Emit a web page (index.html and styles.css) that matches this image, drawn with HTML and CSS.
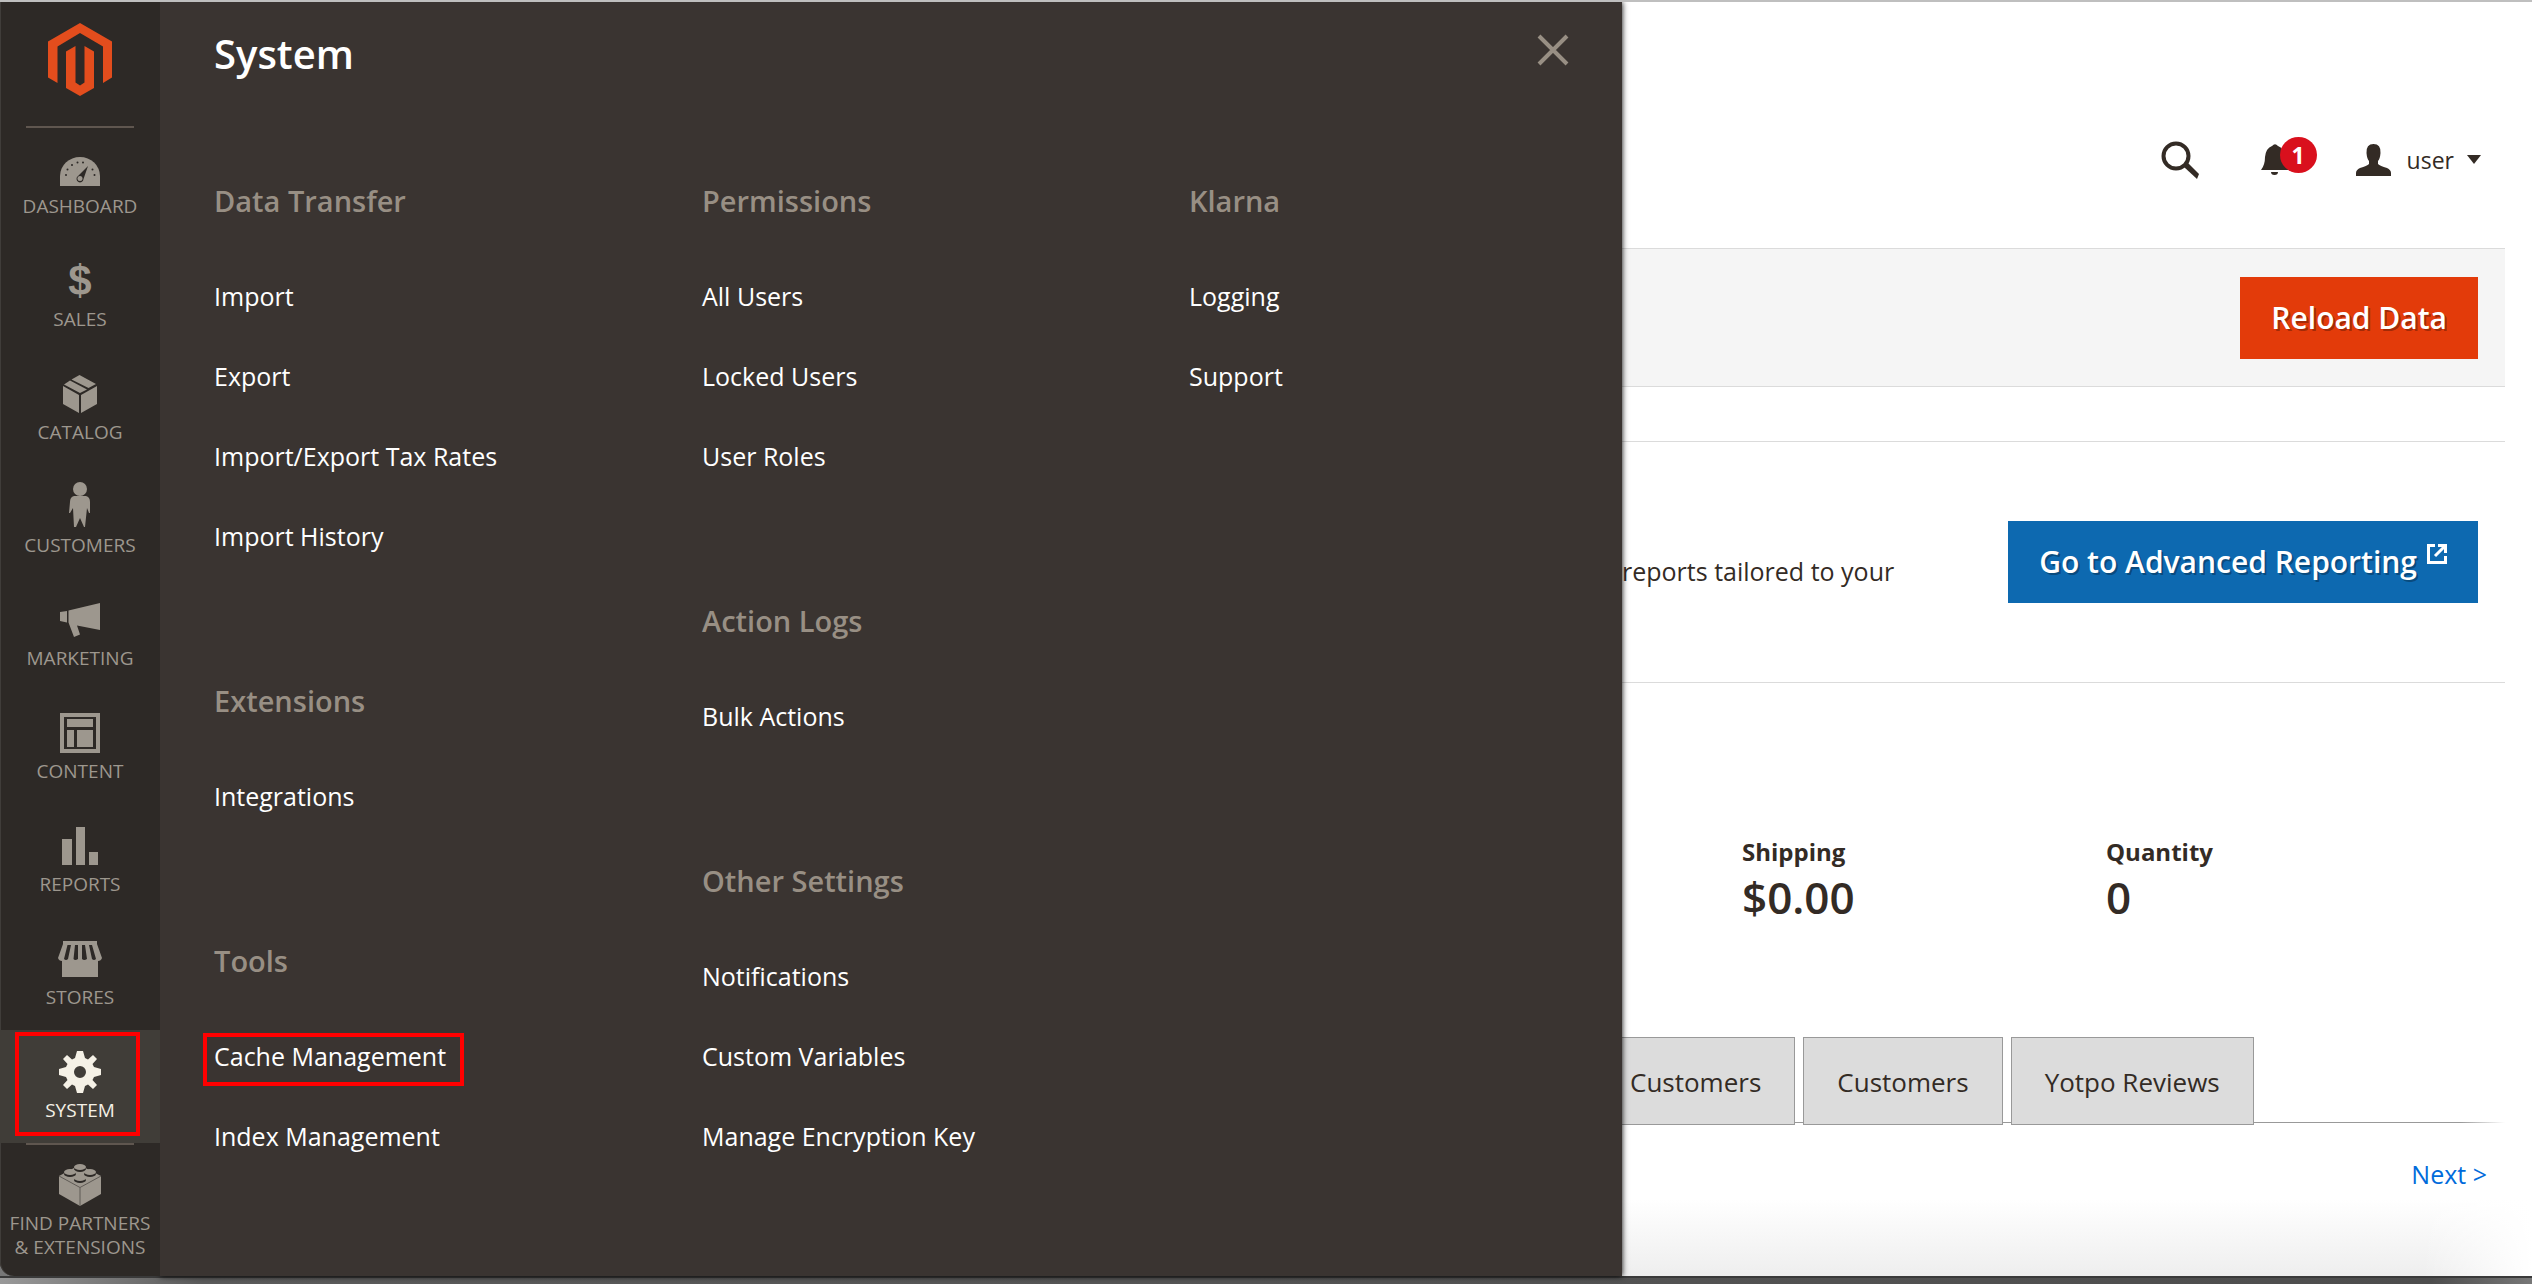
FILE: index.html
```html
<!DOCTYPE html>
<html lang="en">
<head>
<meta charset="utf-8">
<title>Dashboard / Magento Admin</title>
<link rel="stylesheet" href="styles.css">
</head>
<body>
<div class="app">
  <nav class="sidebar" aria-label="Main">
    <a class="logo" href="#" aria-label="Magento">
      <svg width="64" height="73" viewBox="0 0 64 73"><path d="M32 0 64 18.500V54.500L55 60V23.500L32 10 9.500 23.500V60L0 54.500V18.500Z"/><path d="M18 28.500 27.500 23V59.500L32 62.500 36.500 59.500V23L46 28.500V65L32 73 18 65Z"/></svg>
    </a>
    <ul class="menu">
      <li><a class="item" href="#"><span class="glyph"><svg width="40" height="35" viewBox="0 -6 40 35"><path d="M0 29V19A20 19 0 0 1 40 19V29Z"/><g class="cut"><circle cx="6" cy="18" r="1"/><circle cx="7.500" cy="12.500" r="1"/><circle cx="12" cy="8" r="1"/><circle cx="17.500" cy="5.500" r="1"/><circle cx="23" cy="5.500" r="1"/><circle cx="32.500" cy="12.500" r="1"/><circle cx="34.500" cy="18" r="1"/><path d="M28 9 23.500 22A3.500 3.500 0 1 1 18 19Z"/></g><circle cx="20" cy="21.500" r="2.500"/></svg></span><span>DASHBOARD</span></a></li>
      <li><a class="item" href="#"><span class="glyph dollar">$</span><span>SALES</span></a></li>
      <li><a class="item" href="#"><span class="glyph"><svg width="34" height="38" viewBox="0 0 34 38"><path d="M8.500 4.500 16.500 0 33 9 25.500 13ZM7 5.500 24 14.500 17 18 1 9.500ZM0 11 16 20V38L0 29ZM18 20 34 11V29L18 38Z"/></svg></span><span>CATALOG</span></a></li>
      <li><a class="item" href="#"><span class="glyph"><svg width="22" height="50" viewBox="0 0 22 50"><circle cx="11" cy="7" r="7"/><path d="M5 14H17Q21 15 21 20V31H20L18 26 16 45H15L11 36 7 45H5L4 26 1 31H0L1 20Q1 15 5 14Z"/></svg></span><span>CUSTOMERS</span></a></li>
      <li><a class="item" href="#"><span class="glyph"><svg width="40" height="34" viewBox="0 0 40 34"><path d="M0 9 7 8V19.500L0 18ZM8.500 7.500 40 0V27L17 22.500 20 31.500 14 34 8.500 19.500Z"/></svg></span><span>MARKETING</span></a></li>
      <li><a class="item" href="#"><span class="glyph"><svg width="40" height="40" viewBox="0 0 40 40"><path fill-rule="evenodd" d="M0 0H40V40H0ZM4 4V36H36V4ZM7 6H33V14H7ZM7 17H14V34H7ZM17 17H33V34H17Z"/></svg></span><span>CONTENT</span></a></li>
      <li><a class="item" href="#"><span class="glyph"><svg width="36" height="38" viewBox="0 0 36 38"><path d="M0 12H10V38H0ZM14 0H23V38H14ZM27 25H36V38H27Z"/></svg></span><span>REPORTS</span></a></li>
      <li><a class="item" href="#"><span class="glyph"><svg width="44" height="36" viewBox="0 0 44 36"><path d="M5 0H39V3L44 17Q43 20 40 20V36H4V20Q1 20 0 17L5 3Z"/><path class="cut" d="M9.500 4H13L10 18Q8 20 6 18ZM17 4H20V18Q17 20 15.500 18ZM24 4H27L29 18Q26 20 24 18ZM31 4H34L38 18Q36 20 34 18Z"/></svg></span><span>STORES</span></a></li>
      <li><a class="item active" href="#"><span class="glyph"><svg width="42" height="42" viewBox="-21 -21 42 42"><path fill-rule="evenodd" d="M-3-21H3L5-14 8-12.500 13-17 17-13 12.500-8 14-5 21-3V3L14 5 12.500 8 17 13 13 17 8 12.500 5 14 3 21H-3L-5 14-8 12.500-13 17-17 13-12.500 8-14 5-21 3V-3L-14-5-12.500-8-17-13-13-17-8-12.500-5-14ZM6 0A6 6 0 1 0-6 0 6 6 0 1 0 6 0Z"/></svg></span><span>SYSTEM</span></a></li>
      <li><a class="item partners" href="#"><span class="glyph"><svg width="42" height="42" viewBox="0 0 42 42"><path d="M0 12 20.500 1 42 12V30L21 42 0 30Z"/><path class="seam" d="M0 12 21 23.500 42 12M21 23.500V42"/><g class="cut"><ellipse cx="21" cy="5" rx="6" ry="3"/><ellipse cx="11" cy="10" rx="6" ry="3"/><ellipse cx="31" cy="10" rx="6" ry="3"/><ellipse cx="21" cy="16" rx="6" ry="3"/></g><ellipse cx="21" cy="3" rx="6" ry="3"/><ellipse cx="11" cy="8" rx="6" ry="3"/><ellipse cx="31" cy="8" rx="6" ry="3"/><ellipse cx="21" cy="14" rx="6" ry="3"/></svg></span><span>FIND PARTNERS<br>&amp; EXTENSIONS</span></a></li>
    </ul>
  </nav>

  <section class="flyout" aria-label="System">
    <header class="flyout-head">
      <h2>System</h2>
      <button class="close" type="button" aria-label="Close"><svg width="32" height="32" viewBox="0 0 32 32"><path d="M2 2 30 30M30 2 2 30"/></svg></button>
    </header>
    <div class="columns">
      <div class="column">
        <section><h3>Data Transfer</h3><ul><li><a href="#">Import</a></li><li><a href="#">Export</a></li><li><a href="#">Import/Export Tax Rates</a></li><li><a href="#">Import History</a></li></ul></section>
        <section><h3>Extensions</h3><ul><li><a href="#">Integrations</a></li></ul></section>
        <section><h3>Tools</h3><ul><li><a class="marked" href="#">Cache Management</a></li><li><a href="#">Index Management</a></li></ul></section>
      </div>
      <div class="column">
        <section><h3>Permissions</h3><ul><li><a href="#">All Users</a></li><li><a href="#">Locked Users</a></li><li><a href="#">User Roles</a></li></ul></section>
        <section><h3>Action Logs</h3><ul><li><a href="#">Bulk Actions</a></li></ul></section>
        <section><h3>Other Settings</h3><ul><li><a href="#">Notifications</a></li><li><a href="#">Custom Variables</a></li><li><a href="#">Manage Encryption Key</a></li></ul></section>
      </div>
      <div class="column">
        <section><h3>Klarna</h3><ul><li><a href="#">Logging</a></li><li><a href="#">Support</a></li></ul></section>
      </div>
    </div>
  </section>

  <main class="page">
    <header class="tools">
      <button class="tool" type="button" aria-label="Search"><svg width="38" height="38" viewBox="0 0 38 38"><circle class="ring" cx="15" cy="15" r="12.500"/><path d="M23 26 27 22 38 33 36 38Z"/></svg></button>
      <button class="tool bell" type="button" aria-label="Notifications"><svg width="28" height="31" viewBox="0 0 28 31"><path d="M11 2Q14-1.500 17 2 23 4 24 13 24 21 28 26H0Q4 21 4 13 5 4 11 2ZM10 28H17Q17 31 13.500 31 10 31 10 28Z"/></svg><span class="badge">1</span></button>
      <button class="tool account" type="button"><svg width="35" height="32" viewBox="0 0 35 32"><path d="M17.500 0Q25 0 24.500 9 24 15 22 17V20Q24 22 31 24 35 26 35 29V32H0V29Q0 26 4 24 11 22 13 20V17Q11 15 10.500 9 10 0 17.500 0Z"/></svg><span>user</span><svg width="14" height="9" viewBox="0 0 14 9"><path d="M0 0H14L7 9Z"/></svg></button>
    </header>
    <div class="actions"><button class="button primary" type="button">Reload Data</button></div>
    <section class="reporting">
      <p>reports tailored to your</p>
      <a class="button secondary" href="#">Go to Advanced Reporting<svg width="20" height="20" viewBox="0 0 20 20"><path d="M8 1.500H1.500V18.500H18.500V12M11 1.500H18.500V9M18 2 8 12"/></svg></a>
    </section>
    <dl class="totals">
      <div><dt>Shipping</dt><dd>$0.00</dd></div>
      <div><dt>Quantity</dt><dd>0</dd></div>
    </dl>
    <div class="tabs" role="tablist">
      <button class="tab first" type="button" role="tab">Customers</button>
      <button class="tab" type="button" role="tab">Customers</button>
      <button class="tab" type="button" role="tab">Yotpo Reviews</button>
    </div>
    <a class="next" href="#">Next &gt;</a>
  </main>
</div>
<div class="window-edge"></div>
</body>
</html>
```
FILE: styles.css
```css
* { box-sizing: border-box; }
body {
  margin: 0;
  min-height: 100vh;
  display: flex;
  flex-direction: column;
  border-top: 2px solid #bfbfbf;
  background: #777;
  color: #332b25;
  font: 25px/36px "Open Sans", "Noto Sans", sans-serif;
}
ul, dl, dd, h2, h3, p { margin: 0; padding: 0; list-style: none; }
a { color: inherit; text-decoration: none; }
button { font: inherit; color: inherit; border: 0; padding: 0; background: none; cursor: pointer; }
svg { display: block; fill: currentColor; flex: none; }

.app {
  flex: 1;
  display: grid;
  grid-template-columns: 160px minmax(0, 1462fr) minmax(0, 910fr);
}

/* Sidebar */
.sidebar {
  position: relative;
  z-index: 1;
  background: #2d2926;
  border-bottom-left-radius: 14px;
  box-shadow: inset 1px 0 #403d3a;
  color: #9d978e;
}
.logo {
  display: flex;
  justify-content: center;
  height: 124px;
  padding-top: 21px;
  color: #e34d1d;
}
.item {
  display: flex;
  flex-direction: column;
  align-items: center;
  height: 113px;
  padding-top: 15px;
  position: relative;
  font-size: 19px;
  line-height: 24px;
  text-align: center;
  white-space: nowrap;
}
.menu li:first-child .item::before,
.partners::before {
  content: "";
  position: absolute;
  top: 0;
  left: 26px;
  right: 26px;
  height: 2px;
  background: #5f564f;
}
.glyph { display: flex; align-items: center; height: 54px; }
.glyph + span { margin-top: -1px; }
.dollar { font: bold 42px/54px "Liberation Sans", sans-serif; }
.cut { fill: #2d2926; }
.seam { fill: none; stroke: #5f5a54; }
.active { background: #403d38; color: #f5f1e6; }
.active::after {
  content: "";
  position: absolute;
  inset: 2px 20px 7px 15px;
  border: 4px solid #f00;
}
.partners { height: auto; }

/* System menu */
.flyout {
  position: relative;
  padding-left: 54px;
  background: #3a3431;
  color: #fff;
  box-shadow: 0 0 6px #000;
}
.flyout-head {
  display: flex;
  justify-content: space-between;
  align-items: flex-start;
  height: 175px;
  padding: 22px 53px 0 0;
}
.flyout-head h2 { font-size: 40px; line-height: 60px; font-weight: 600; }
.close { margin-top: 10px; color: #988f84; }
.close svg { stroke: currentColor; stroke-width: 4; }
.columns { display: grid; grid-template-columns: 488fr 487fr 433fr; }
.column section { margin-bottom: 101px; }
.column section:last-child { margin-bottom: 0; }
.column h3 {
  height: 79px;
  padding-top: 4px;
  color: #988f84;
  font-size: 29px;
  line-height: 40px;
  font-weight: 600;
}
.column li { display: flex; align-items: center; height: 80px; }
.marked { position: relative; }
.marked::after {
  content: "";
  position: absolute;
  inset: -5px -18px -12px -11px;
  border: 4px solid #f00;
}

/* Dashboard page */
.page {
  display: flex;
  flex-direction: column;
  padding-right: 27px;
  background: linear-gradient(90deg, transparent 88%, #fff), linear-gradient(#fff 94%, #eee);
}
.tools {
  display: flex;
  justify-content: flex-end;
  align-items: center;
  height: 246px;
  padding: 69px 24px 0 0;
  font-size: 23px;
}
.ring { fill: none; stroke: currentColor; stroke-width: 4; }
.bell { position: relative; margin: 0 67px 0 62px; }
.badge {
  position: absolute;
  left: 19px;
  top: -7px;
  width: 37px;
  height: 36px;
  border-radius: 50%;
  background: #d9101d;
  color: #fff;
  font-size: 23px;
  line-height: 36px;
  font-weight: 700;
}
.account { display: flex; align-items: center; }
.account span { margin: 0 13px 0 16px; }
.actions {
  display: flex;
  justify-content: flex-end;
  align-items: center;
  height: 139px;
  padding-right: 27px;
  border: solid #dbdbdb;
  border-width: 1px 0;
  background: #f5f5f5;
}
.button {
  display: flex;
  align-items: center;
  justify-content: center;
  height: 82px;
  padding: 0 31px;
  color: #fff;
  font-size: 30px;
  font-weight: 600;
  text-shadow: 2px 2px 0 rgba(0, 0, 0, .3);
  white-space: nowrap;
}
.primary { background: #e33b0a; }
.secondary { background: #0d69b0; }
.secondary svg { margin: -16px 0 0 10px; fill: none; stroke: currentColor; stroke-width: 3; }
.reporting {
  display: flex;
  justify-content: space-between;
  align-items: center;
  height: 242px;
  margin-top: 54px;
  padding-right: 27px;
  border: solid #dbdbdb;
  border-width: 1px 0;
}
.reporting p { padding-top: 18px; white-space: nowrap; }
.totals {
  display: grid;
  grid-template-columns: 364fr 399fr;
  margin-top: 151px;
  padding-left: 120px;
}
.totals dt { font-size: 24px; font-weight: 700; }
.totals dd { font-size: 44px; line-height: 54px; font-weight: 600; }
.tabs {
  display: flex;
  gap: 8px;
  height: 88px;
  margin-top: 113px;
  background: linear-gradient(90deg, #999 95%, transparent) 0 85px / 100% 1px no-repeat;
}
.tab {
  padding: 2px 33px 0;
  border: 1px solid #999;
  background: #dcdcdc;
  font-size: 26px;
  white-space: nowrap;
}
.first { padding-left: 8px; border-left: 0; }
.next { align-self: flex-end; margin: 31px 18px 0 0; color: #006bdb; }

.window-edge {
  height: 8px;
  border-top: 2px solid #3a3a3a;
  background: linear-gradient(90deg, #999, #5c5c5c 8%, #4d4d4d 96%, #777);
}
```
